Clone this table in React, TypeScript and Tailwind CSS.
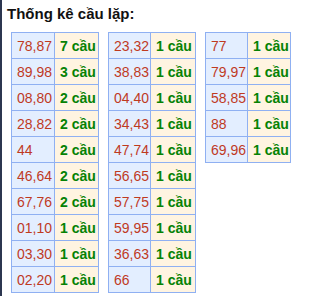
const columns: [string, number][][] = [
  [
    ['78,87', 7],
    ['89,98', 3],
    ['08,80', 2],
    ['28,82', 2],
    ['44', 2],
    ['46,64', 2],
    ['67,76', 2],
    ['01,10', 1],
    ['03,30', 1],
    ['02,20', 1],
  ],
  [
    ['23,32', 1],
    ['38,83', 1],
    ['04,40', 1],
    ['34,43', 1],
    ['47,74', 1],
    ['56,65', 1],
    ['57,75', 1],
    ['59,95', 1],
    ['36,63', 1],
    ['66', 1],
  ],
  [
    ['77', 1],
    ['79,97', 1],
    ['58,85', 1],
    ['88', 1],
    ['69,96', 1],
  ],
];

// widths of the pair/count cells for each block
const widths = [
  ['w-[43px]', 'w-[44px]'],
  ['w-[42px]', 'w-[45px]'],
  ['w-[42px]', 'w-[43px]'],
];

function RepeatTable({ rows, idx }: { rows: [string, number][]; idx: number }) {
  const [w1, w2] = widths[idx];
  return (
    <div className="flex flex-col self-start border-l border-t border-[#8fb0f2]">
      {rows.map(([pair, count]) => (
        <div key={pair} className="flex h-[26px]">
          <div className={`${w1} flex items-center pl-[5px] bg-[#e3eeff] border-r border-b border-[#8fb0f2] text-[#bf3a1f]`}>
            {pair}
          </div>
          <div className={`${w2} flex items-center pl-[5px] bg-[#fff4e1] border-r border-b border-[#8fb0f2] font-bold text-[#058205]`}>
            {count} cầu
          </div>
        </div>
      ))}
    </div>
  );
}

export default function App() {
  return (
    <div className="w-[329px] h-[300px] bg-white" style={{ fontFamily: '"Liberation Sans", Arial, sans-serif' }}>
      <div className="h-[296px] border-l-2 border-[#2c3650] pl-[5px] pt-[5px]">
        <h3 className="text-[15px] leading-[17px] font-bold text-[#111]">Thống kê cầu lặp:</h3>
        <div className="mt-[10px] ml-[4px] flex gap-[9px] text-[14px] leading-none">
          {columns.map((rows, i) => (
            <RepeatTable key={i} rows={rows} idx={i} />
          ))}
        </div>
      </div>
    </div>
  );
}
